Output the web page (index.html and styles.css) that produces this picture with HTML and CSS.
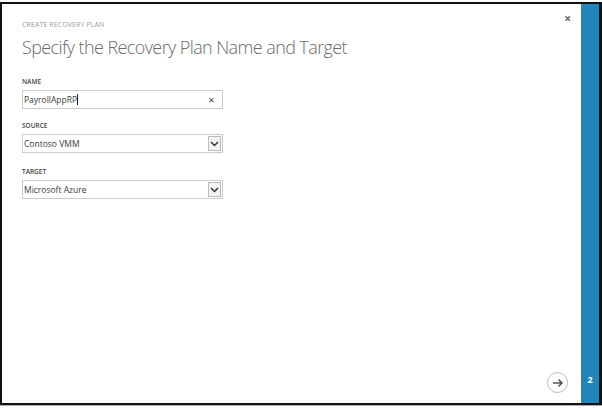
FILE: index.html
```html
<!DOCTYPE html>
<html>
<head>
<meta charset="utf-8">
<link rel="stylesheet" href="styles.css">
</head>
<body>
<div class="frame">
  <div class="dialog">
    <div class="main">
      <div class="crumb">CREATE RECOVERY PLAN</div>
      <h1 class="title">Specify the Recovery Plan Name and Target</h1>
      <div class="field">
        <div class="label">NAME</div>
        <div class="input">
          <span class="value">PayrollAppRP<span class="caret"></span></span>
          <span class="clear">×</span>
        </div>
      </div>
      <div class="field">
        <div class="label">SOURCE</div>
        <div class="input select">
          <span class="value">Contoso VMM</span>
          <span class="drop"><svg width="9" height="6" viewBox="0 0 9 6"><path d="M1 1l3.5 3.5L8 1" fill="none" stroke="#333" stroke-width="1.5"/></svg></span>
        </div>
      </div>
      <div class="field field-last">
        <div class="label">TARGET</div>
        <div class="input select">
          <span class="value">Microsoft Azure</span>
          <span class="drop"><svg width="9" height="6" viewBox="0 0 9 6"><path d="M1 1l3.5 3.5L8 1" fill="none" stroke="#333" stroke-width="1.5"/></svg></span>
        </div>
      </div>
      <div class="spacer"></div>
      <div class="footer">
        <span class="next"><svg width="12" height="10" viewBox="0 0 12 10"><path d="M1 5h9M6.5 1.5L10 5l-3.5 3.5" fill="none" stroke="#555" stroke-width="1.6"/></svg></span>
      </div>
    </div>
    <div class="close">×</div>
    <div class="side"><span class="step">2</span></div>
  </div>
</div>
</body>
</html>
```
FILE: styles.css
```css
html, body {
  margin: 0;
  padding: 0;
  background: #fff;
}
body {
  width: 602px;
  height: 408px;
  font-family: "Open Sans", "Noto Sans", sans-serif;
}
.frame {
  padding-top: 2px;
  height: 406px;
  box-sizing: border-box;
  border-bottom: 2px solid #aaa;
}
.dialog {
  position: relative;
  display: flex;
  height: 403px;
  box-sizing: border-box;
  border: 2px solid #111;
  border-right-width: 3px;
  background: #fff;
}
.main {
  flex: 1;
  display: flex;
  flex-direction: column;
  padding: 16px 0 0 20px;
}
.crumb {
  font-size: 7px;
  color: #9a9a9a;
  letter-spacing: 0.1px;
  line-height: 10px;
}
.title {
  margin: 4px 0 5px 0;
  font-weight: 300;
  font-size: 18px;
  line-height: 26px;
  color: #6a6a6a;
  letter-spacing: -0.6px;
}
.field {
  width: 201px;
}
.label {
  font-size: 6.5px;
  font-weight: 600;
  color: #444;
  line-height: 10px;
  margin-top: 12px;
  margin-bottom: 3px;
}
.field-last .label { margin-top: 14px; }
.input {
  display: flex;
  align-items: center;
  height: 19px;
  box-sizing: border-box;
  border: 1px solid #cbcbcb;
  background: #fff;
  padding-left: 1px;
}
.value {
  flex: 1;
  font-size: 8.5px;
  color: #3a3a3a;
  display: flex;
  align-items: center;
}
.caret {
  display: inline-block;
  width: 1px;
  height: 11px;
  background: #222;
}
.clear {
  font-size: 11px;
  color: #444;
  width: 21px;
  text-align: center;
  line-height: 17px;
}
.select .drop {
  display: flex;
  align-items: center;
  justify-content: center;
  width: 13px;
  height: 15px;
  margin-right: 1px;
  border: 1px solid #bbb;
  background: #f2f2f2;
  box-sizing: border-box;
}
.spacer { flex: 1; }
.footer {
  display: flex;
  justify-content: flex-end;
  padding: 0 13px 10px 0;
}
.next {
  display: flex;
  align-items: center;
  justify-content: center;
  width: 19px;
  height: 19px;
  border: 1.5px solid #bbb;
  border-radius: 50%;
}
.close {
  position: absolute;
  top: 6px;
  right: 28px;
  font-size: 12px;
  font-weight: 700;
  color: #666;
}
.side {
  width: 18px;
  background: #1f86b7;
  display: flex;
  align-items: flex-end;
  justify-content: center;
  padding-bottom: 17px;
  box-sizing: border-box;
}
.step {
  color: #fff;
  font-size: 9px;
  font-weight: 700;
}
```
